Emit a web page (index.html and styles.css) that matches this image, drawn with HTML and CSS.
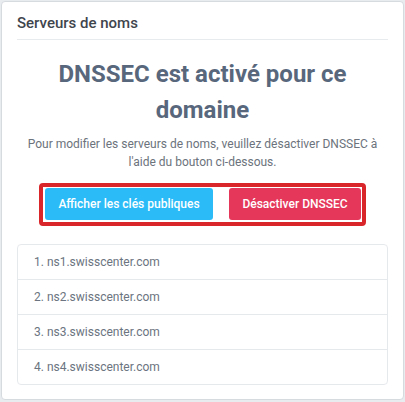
FILE: index.html
```html
<!DOCTYPE html>
<html lang="fr">
<head>
<meta charset="utf-8">
<title>Serveurs de noms</title>
<link rel="stylesheet" href="styles.css">
</head>
<body>
<div class="card">
  <div class="card-header">Serveurs de noms</div>
  <h2 class="title">DNSSEC est activé pour ce domaine</h2>
  <p class="lead">Pour modifier les serveurs de noms, veuillez désactiver DNSSEC à l'aide du bouton ci-dessous.</p>
  <div class="actions-row">
    <div class="actions">
      <button class="btn btn-info">Afficher les clés publiques</button>
      <button class="btn btn-danger">Désactiver DNSSEC</button>
    </div>
  </div>
  <ol class="ns-list">
    <li>1. ns1.swisscenter.com</li>
    <li>2. ns2.swisscenter.com</li>
    <li>3. ns3.swisscenter.com</li>
    <li>4. ns4.swisscenter.com</li>
  </ol>
</div>
</body>
</html>
```
FILE: styles.css
```css
html, body {
  margin: 0;
  padding: 0;
}
body {
  background: #e9ecef;
  font-family: Roboto, "Liberation Sans", Arial, sans-serif;
  width: 405px;
  height: 402px;
  overflow: hidden;
}
.card {
  margin: 1px 1px 0 1px;
  height: 397px;
  box-sizing: content-box;
  background: #fff;
  border: 1px solid #d6dbe0;
  border-radius: 4px;
  padding: 0 15px 0 15px;
}
.card-header {
  padding: 11px 0 6px;
  font-size: 15px;
  line-height: 20px;
  font-weight: 500;
  color: #3f454d;
  border-bottom: 1px solid #e8ebee;
}
.title {
  margin: 16px 0 0;
  font-size: 24px;
  line-height: 36px;
  font-weight: 700;
  color: #58677c;
  text-align: center;
}
.lead {
  margin: 8px 0 0;
  font-size: 12px;
  line-height: 17.5px;
  color: #6c737c;
  text-align: center;
}
.actions-row {
  display: flex;
  justify-content: center;
  margin-top: 12px;
}
.actions {
  display: flex;
  gap: 16px;
  border: 4px solid #d9262b;
  border-radius: 4px;
  padding: 1px 1px 2px 2px;
}
.btn {
  height: 32px;
  border: 0;
  border-radius: 3px;
  color: #fff;
  font-family: Roboto, "Liberation Sans", Arial, sans-serif;
  font-size: 12px;
  font-weight: 500;
  padding: 0;
  cursor: pointer;
}
.btn-info {
  width: 168px;
  background: #2bbcf8;
}
.btn-danger {
  width: 132px;
  background: #e5375a;
}
.ns-list {
  list-style: none;
  margin: 18px 0 0;
  padding: 0;
  border: 1px solid #e6e9ec;
  border-radius: 4px;
}
.ns-list li {
  height: 34px;
  line-height: 34px;
  padding: 0 16px;
  font-size: 12px;
  color: #6b7480;
  border-top: 1px solid #e6e9ec;
}
.ns-list li:first-child {
  border-top: 0;
}
```
